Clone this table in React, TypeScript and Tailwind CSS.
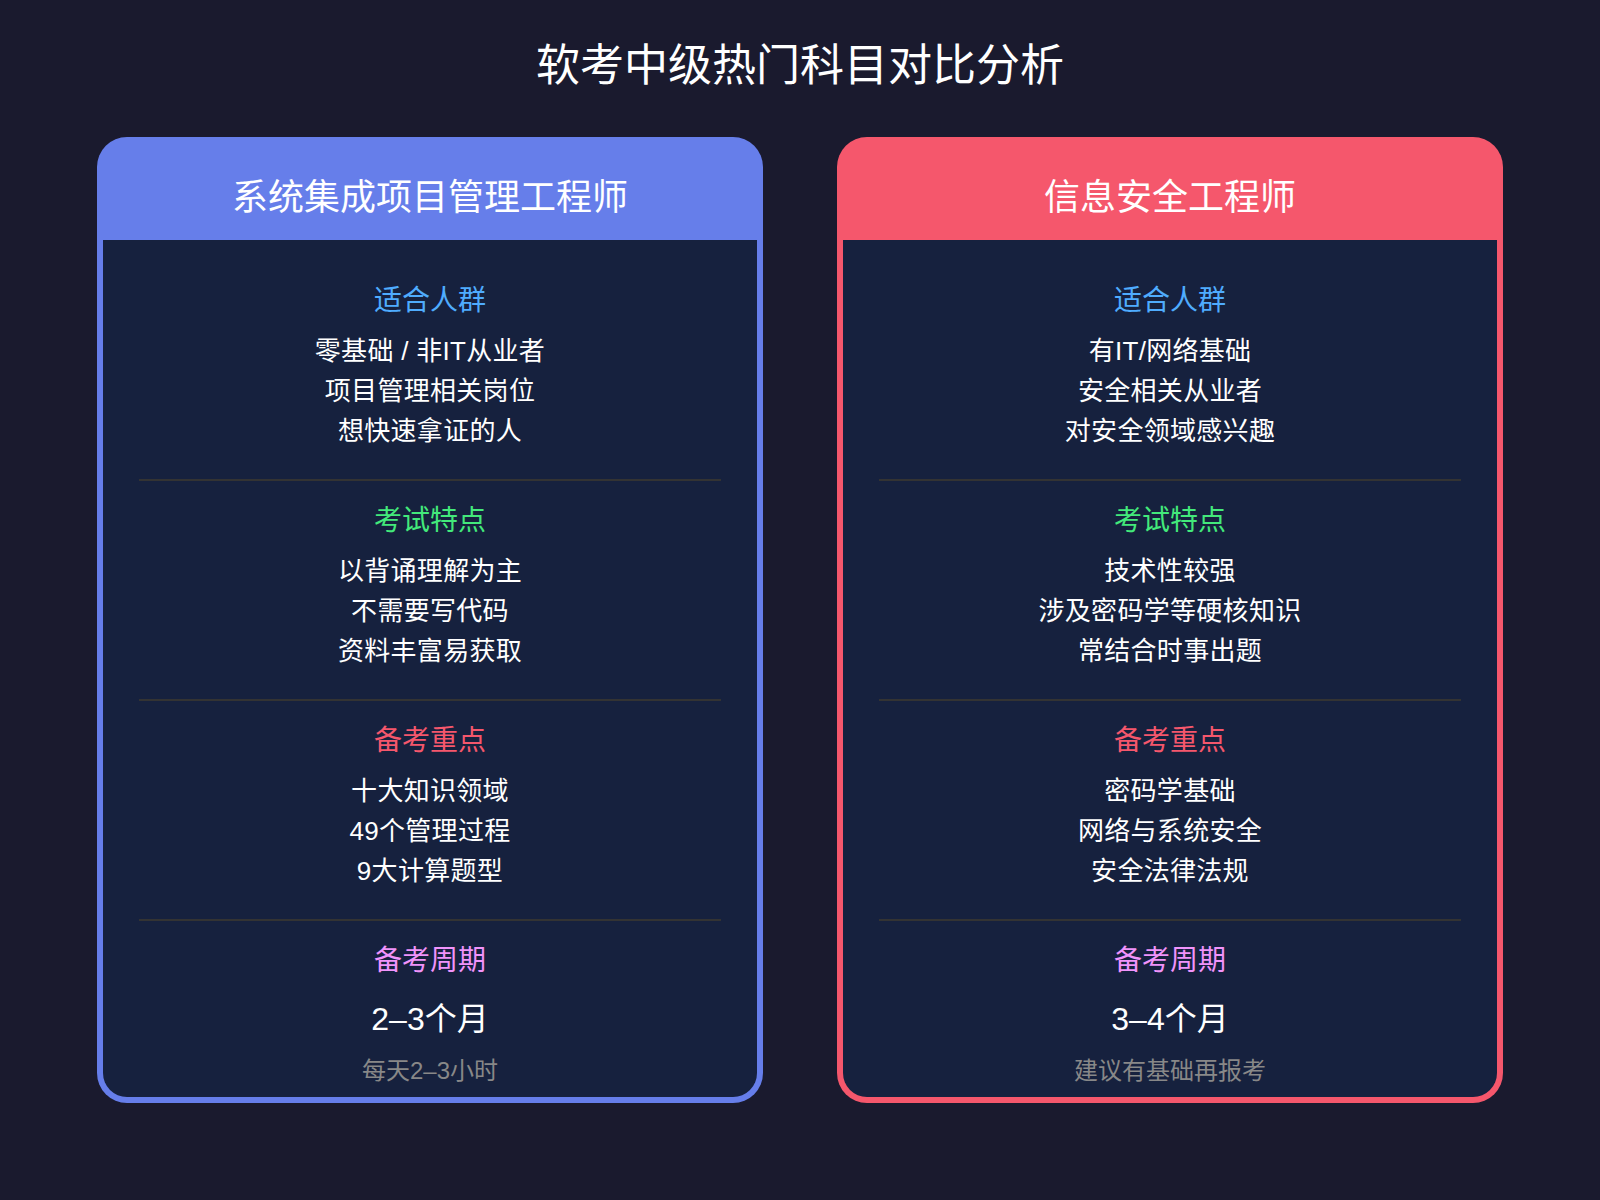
import React from "react";

type Section = { title: string; color: string; lines: string[] };

const cards = [
  {
    name: "系统集成项目管理工程师",
    shell: "bg-[#667eea]",
    sections: [
      { title: "适合人群", color: "text-[#4facfe]", lines: ["零基础 / 非IT从业者", "项目管理相关岗位", "想快速拿证的人"] },
      { title: "考试特点", color: "text-[#43e97b]", lines: ["以背诵理解为主", "不需要写代码", "资料丰富易获取"] },
      { title: "备考重点", color: "text-[#f5576c]", lines: ["十大知识领域", "49个管理过程", "9大计算题型"] },
    ] as Section[],
    period: "2–3个月",
    note: "每天2–3小时",
  },
  {
    name: "信息安全工程师",
    shell: "bg-[#f5576c]",
    sections: [
      { title: "适合人群", color: "text-[#4facfe]", lines: ["有IT/网络基础", "安全相关从业者", "对安全领域感兴趣"] },
      { title: "考试特点", color: "text-[#43e97b]", lines: ["技术性较强", "涉及密码学等硬核知识", "常结合时事出题"] },
      { title: "备考重点", color: "text-[#f5576c]", lines: ["密码学基础", "网络与系统安全", "安全法律法规"] },
    ] as Section[],
    period: "3–4个月",
    note: "建议有基础再报考",
  },
];

function Card({ c }: { c: (typeof cards)[number] }) {
  return (
    <div className={`flex flex-col w-[666px] rounded-[30px] p-[6px] pt-0 ${c.shell}`}>
      <div className="h-[103px] flex items-center justify-center pt-[18px]">
        <h2 className="text-white text-[36px] leading-[44px]">{c.name}</h2>
      </div>
      <div className="bg-[#16213e] rounded-b-[24px] px-9 pt-[21px] pb-[10px] flex flex-col">
        {c.sections.map((s) => (
          <div key={s.title} className="border-b-2 border-[#333] pt-5 pb-[28px] flex flex-col items-center">
            <h3 className={`${s.color} text-[28px] leading-[40px]`}>{s.title}</h3>
            <div className="mt-[10px] flex flex-col items-center">
              {s.lines.map((l) => (
                <p key={l} className="text-white text-[26px] leading-[40px] tracking-[0.3px]">
                  {l}
                </p>
              ))}
            </div>
          </div>
        ))}
        <div className="pt-5 flex flex-col items-center">
          <h3 className="text-[#f093fb] text-[28px] leading-[40px]">备考周期</h3>
          <p className="mt-[18px] text-white text-[32px] leading-[40px]">{c.period}</p>
          <p className="mt-[16px] text-[#888] text-[24px] leading-[32px]">{c.note}</p>
        </div>
      </div>
    </div>
  );
}

export default function App() {
  return (
    <div
      className="w-[1600px] h-[1200px] bg-[#1a1a2e] flex flex-col items-center"
      style={{ fontFamily: '"Liberation Sans", "Noto Sans CJK SC", sans-serif' }}
    >
      <h1 className="mt-[43px] text-white text-[44px] leading-[46px]">软考中级热门科目对比分析</h1>
      <div className="mt-[48px] flex gap-[74px]">
        {cards.map((c) => (
          <Card key={c.name} c={c} />
        ))}
      </div>
    </div>
  );
}
